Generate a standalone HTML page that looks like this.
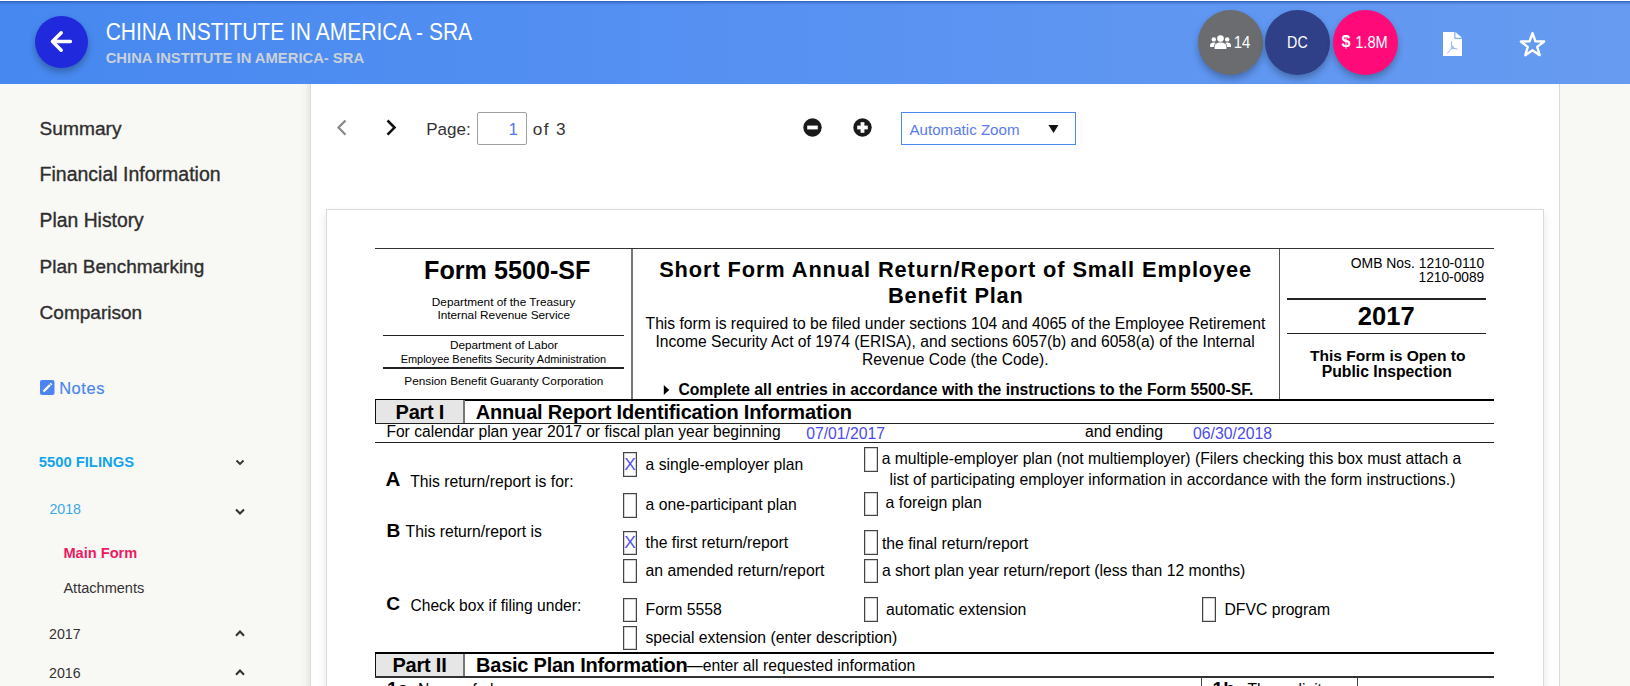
<!DOCTYPE html>
<html><head><meta charset="utf-8">
<style>
html,body{margin:0;padding:0;}
body{width:1630px;height:686px;overflow:hidden;position:relative;background:#F8F8F5;font-family:"Liberation Sans",sans-serif;}
.a{position:absolute;}
.t{position:absolute;white-space:nowrap;line-height:1;color:#000;}
#hdr{position:absolute;left:0;top:0;width:1630px;height:84px;background:linear-gradient(90deg,#4688F0 0%,#5892F2 50%,#679BF1 100%);}
#hdr:before{content:"";position:absolute;left:0;top:0;width:100%;height:1px;background:#fff;}
#hdr:after{content:"";position:absolute;left:0;top:1px;width:100%;height:4px;background:linear-gradient(180deg,#2A5BB5 0%,rgba(42,91,181,.45) 35%,rgba(42,91,181,0) 100%);}
.circ{position:absolute;border-radius:50%;box-shadow:0 4px 7px rgba(0,0,0,.28);}
#panel{position:absolute;left:310px;top:84px;width:1248px;height:602px;background:#fff;border-left:1px solid #DDD8DB;border-right:1px solid #DDD8DB;}
#sbshadow{position:absolute;left:299px;top:84px;width:11px;height:602px;background:linear-gradient(90deg,rgba(0,0,0,0) 0%,rgba(0,0,0,.015) 50%,rgba(0,0,0,.065) 100%);}
#page{position:absolute;left:326px;top:209px;width:1216px;height:500px;background:#fff;border:1px solid #DED8DC;box-shadow:0 5px 9px rgba(0,0,0,.11);}
.hl{position:absolute;background:#222;}
.vl{position:absolute;background:#666;}
.cb{position:absolute;width:12px;height:22.6px;border:1px solid #444;box-shadow:inset 0 0 0 0.5px #aaa;}
.chev{position:absolute;}
</style></head>
<body>
<div id="hdr"></div>
<!-- back button -->
<div class="circ" style="left:35px;top:15.8px;width:53px;height:52.5px;background:#2129DD;"></div>
<svg class="a" style="left:49px;top:29px" width="25" height="25" viewBox="0 0 25 25"><path d="M21.4 12.5H4M12.2 3.8L3.5 12.5l8.7 8.7" fill="none" stroke="#fff" stroke-width="3.5" stroke-linecap="round" stroke-linejoin="round"/></svg>

<!-- header circles -->
<div class="circ" style="left:1198px;top:10px;width:65px;height:65px;background:#6A6C70;"></div>
<div class="circ" style="left:1265px;top:10px;width:65px;height:65px;background:#2F3F88;"></div>
<div class="circ" style="left:1333px;top:10px;width:65px;height:65px;background:#FF0A78;"></div>
<!-- users icon -->
<svg class="a" style="left:1210px;top:35px" width="21" height="14" viewBox="0 0 21 14">
<circle cx="10.5" cy="3.6" r="3.3" fill="#fff"/>
<path d="M4.6 14v-2.2c0-2.6 2.2-4.3 5.9-4.3s5.9 1.7 5.9 4.3V14z" fill="#fff"/>
<circle cx="3.8" cy="4.4" r="2.2" fill="#fff"/>
<circle cx="17.2" cy="4.4" r="2.2" fill="#fff"/>
<path d="M0 12v-1.6C0 8.6 1.4 7.4 3.8 7.4c.9 0 1.6.2 2.1.5C4.5 8.9 3.8 10.3 3.8 12z" fill="#fff"/>
<path d="M21 12v-1.6c0-1.8-1.4-3-3.8-3-.9 0-1.6.2-2.1.5 1.4 1 2.1 2.4 2.1 4.1z" fill="#fff"/>
</svg>
<!-- pdf icon -->
<svg class="a" style="left:1443px;top:32px" width="19" height="24" viewBox="0 0 19 24">
<path d="M0 0H11.4V6.7H19V24H0z" fill="#fff"/>
<path d="M12.4 0L19 5.7H12.4z" fill="#fff"/>
<path d="M8.6 9.5C8.4 12 8.6 14.5 9.5 15.8M9.5 15.8C8 17.5 6 19.5 4.3 21M9.5 15.8C11 16.3 13 17 14.3 17.2" fill="none" stroke="#6A9BF1" stroke-width="0.8"/>
<circle cx="9.4" cy="15.6" r="1.3" fill="none" stroke="#6A9BF1" stroke-width="0.6"/>
</svg>
<!-- star -->
<svg class="a" style="left:1519px;top:31px" width="27" height="27" viewBox="0 0 27 27"><path d="M13.50 2.10 L16.44 10.25 L25.10 10.53 L18.26 15.85 L20.67 24.17 L13.50 19.30 L6.33 24.17 L8.74 15.85 L1.90 10.53 L10.56 10.25Z" fill="none" stroke="#fff" stroke-width="2.4" stroke-linejoin="round"/></svg>

<!-- sidebar extras -->
<div id="sbshadow"></div>
<div id="panel"></div>
<!-- notes icon -->
<svg class="a" style="left:39.5px;top:380px" width="15" height="15" viewBox="0 0 15 15"><rect x="0" y="0" width="14.5" height="15" rx="2" fill="#4C84F0"/><path d="M3.5 11.5l6.5-6.5" stroke="#fff" stroke-width="2.4" stroke-linecap="butt"/><path d="M10.5 4.5l1-1" stroke="#fff" stroke-width="2.4"/></svg>
<!-- chevrons sidebar -->
<svg class="chev" style="left:234.5px;top:459px" width="10" height="7" viewBox="0 0 10 7"><path d="M1.5 1.5L5 5l3.5-3.5" fill="none" stroke="#333" stroke-width="1.9"/></svg>
<svg class="chev" style="left:234.5px;top:507.5px" width="10" height="8" viewBox="0 0 10 8"><path d="M1 1.6L5 5.6 9 1.6" fill="none" stroke="#333" stroke-width="2.1"/></svg>
<svg class="chev" style="left:234.5px;top:630px" width="10" height="8" viewBox="0 0 10 8"><path d="M1 5.8L5 1.6 9 5.8" fill="none" stroke="#333" stroke-width="2.1"/></svg>
<svg class="chev" style="left:234.5px;top:669px" width="10" height="8" viewBox="0 0 10 8"><path d="M1 5.8L5 1.6 9 5.8" fill="none" stroke="#333" stroke-width="2.1"/></svg>

<!-- toolbar -->
<svg class="a" style="left:334px;top:118px" width="15" height="19" viewBox="0 0 15 19"><path d="M11.5 2.5L4.5 9.6l7 7.1" fill="none" stroke="#888" stroke-width="2.2"/></svg>
<svg class="a" style="left:384px;top:118px" width="15" height="19" viewBox="0 0 15 19"><path d="M3.5 2.5l7 7.1-7 7.1" fill="none" stroke="#111" stroke-width="2.6"/></svg>
<div class="a" style="left:477px;top:112px;width:48px;height:31px;border:1px solid #A0A0A0;border-radius:2px;background:#fff;"></div>
<svg class="a" style="left:803px;top:118px" width="19" height="19" viewBox="0 0 19 19"><circle cx="9.5" cy="9.5" r="9.2" fill="#1A1A1A"/><rect x="4.2" y="7.6" width="10.6" height="3.8" fill="#fff"/></svg>
<svg class="a" style="left:852.5px;top:118px" width="19" height="19" viewBox="0 0 19 19"><circle cx="9.5" cy="9.5" r="9.2" fill="#1A1A1A"/><rect x="4.2" y="7.6" width="10.6" height="3.8" fill="#fff"/><rect x="7.6" y="4.2" width="3.8" height="10.6" fill="#fff"/></svg>
<div class="a" style="left:901px;top:112px;width:173px;height:31px;border:1.5px solid #4A89F0;background:#fff;"></div>
<svg class="a" style="left:1048px;top:124px" width="11" height="10" viewBox="0 0 11 10"><path d="M0.5 1h10L5.5 9z" fill="#111"/></svg>

<!-- pdf page -->
<div id="page"></div>

<!-- form lines -->
<div class="hl" style="left:375px;top:248px;width:1119px;height:1.3px;background:#333;"></div>
<div class="vl" style="left:631px;top:249px;width:2px;height:150px;background:#777;"></div>
<div class="vl" style="left:1278.6px;top:249px;width:1.6px;height:150px;background:#555;"></div>
<div class="hl" style="left:383px;top:334.5px;width:241px;height:1.3px;"></div>
<div class="hl" style="left:383px;top:367.3px;width:241px;height:1.6px;"></div>
<div class="hl" style="left:1287px;top:298.4px;width:199px;height:1.4px;"></div>
<div class="hl" style="left:1287px;top:333px;width:199px;height:1.4px;"></div>
<div class="hl" style="left:375px;top:398.7px;width:1119px;height:2px;background:#000;"></div>
<div class="a" style="left:375px;top:400px;width:88px;height:22.6px;background:#E6E6E6;border-left:1px solid #111;"></div>
<div class="vl" style="left:463px;top:400px;width:1.5px;height:23px;background:#777;"></div>
<div class="hl" style="left:375px;top:422.6px;width:1119px;height:1.3px;"></div>
<div class="hl" style="left:375px;top:441.9px;width:1119px;height:1.3px;"></div>
<div class="hl" style="left:375px;top:651.6px;width:1119px;height:2px;background:#000;"></div>
<div class="a" style="left:375px;top:653.5px;width:88px;height:23px;background:#E6E6E6;border-left:1px solid #111;"></div>
<div class="vl" style="left:463px;top:653.5px;width:1.5px;height:23px;background:#777;"></div>
<div class="hl" style="left:375px;top:676.3px;width:1119px;height:1.4px;background:#333;"></div>
<div class="vl" style="left:1200.5px;top:677px;width:1.4px;height:10px;background:#444;"></div>
<div class="vl" style="left:1356.5px;top:677px;width:1.4px;height:10px;background:#444;"></div>

<!-- checkboxes -->
<div class="cb" style="left:623.4px;top:452.2px;"></div>
<div class="cb" style="left:623.4px;top:493.3px;"></div>
<div class="cb" style="left:623.4px;top:530.7px;"></div>
<div class="cb" style="left:623.4px;top:558.5px;"></div>
<div class="cb" style="left:623.4px;top:597.6px;"></div>
<div class="cb" style="left:623.4px;top:625.5px;"></div>
<div class="cb" style="left:864.2px;top:447px;"></div>
<div class="cb" style="left:864.2px;top:491.5px;"></div>
<div class="cb" style="left:864.2px;top:530.4px;"></div>
<div class="cb" style="left:864.2px;top:558.6px;"></div>
<div class="cb" style="left:864.2px;top:597.4px;"></div>
<div class="cb" style="left:1202.1px;top:597.2px;"></div>
<svg class="a" style="left:663px;top:385px" width="7" height="10" viewBox="0 0 7 10"><path d="M0.8 0L6.2 5 0.8 10z" fill="#000"/></svg>

<div class="t" style="left:105.7px;top:21.91px;font-size:21.01px;transform:scaleY(1.14);transform-origin:0 84.68%;color:#fff;">CHINA INSTITUTE IN AMERICA - SRA</div>
<div class="t" style="left:105.7px;top:50.68px;font-size:14.79px;font-weight:bold;color:#C9D1DB;">CHINA INSTITUTE IN AMERICA- SRA</div>
<div class="t" style="left:1233.7px;top:35.66px;font-size:14.92px;transform:scaleY(1.1);transform-origin:0 84.68%;color:#fff;">14</div>
<div class="t" style="left:1287.1px;top:36.22px;font-size:14.26px;transform:scaleY(1.1);transform-origin:0 84.68%;color:#fff;">DC</div>
<div class="t" style="left:1341.5px;top:34.05px;font-size:16.00px;font-weight:bold;color:#fff;">$</div>
<div class="t" style="left:1355.2px;top:35.88px;font-size:14.66px;transform:scaleY(1.1);transform-origin:0 84.68%;color:#fff;">1.8M</div>
<div class="t" style="left:39.6px;top:118.97px;font-size:19.17px;color:#2E2E2E;-webkit-text-stroke:0.35px #2E2E2E;">Summary</div>
<div class="t" style="left:39.6px;top:164.59px;font-size:19.50px;color:#2E2E2E;-webkit-text-stroke:0.35px #2E2E2E;">Financial Information</div>
<div class="t" style="left:39.6px;top:210.53px;font-size:19.33px;color:#2E2E2E;-webkit-text-stroke:0.35px #2E2E2E;">Plan History</div>
<div class="t" style="left:39.6px;top:256.92px;font-size:18.99px;color:#2E2E2E;-webkit-text-stroke:0.35px #2E2E2E;">Plan Benchmarking</div>
<div class="t" style="left:39.6px;top:302.77px;font-size:19.05px;color:#2E2E2E;-webkit-text-stroke:0.35px #2E2E2E;">Comparison</div>
<div class="t" style="left:59.2px;top:380.41px;font-size:16.40px;letter-spacing:0.590px;color:#4A86F0;-webkit-text-stroke:0.2px #4A86F0;">Notes</div>
<div class="t" style="left:38.8px;top:454.98px;font-size:14.78px;font-weight:bold;color:#12A5EA;">5500 FILINGS</div>
<div class="t" style="left:49.4px;top:501.87px;font-size:14.20px;color:#3DA9E6;">2018</div>
<div class="t" style="left:63.4px;top:546.22px;font-size:14.62px;font-weight:bold;color:#EC1A62;">Main Form</div>
<div class="t" style="left:63.4px;top:581.07px;font-size:14.56px;color:#333;">Attachments</div>
<div class="t" style="left:49.1px;top:627.17px;font-size:14.20px;color:#333;">2017</div>
<div class="t" style="left:49.1px;top:666.17px;font-size:14.20px;color:#333;">2016</div>
<div class="t" style="left:426.2px;top:120.85px;font-size:17.07px;color:#333;">Page:</div>
<div class="t" style="left:508.4px;top:120.90px;font-size:17.00px;color:#4E7AF0;">1</div>
<div class="t" style="left:532.8px;top:120.74px;font-size:17.20px;letter-spacing:1.370px;color:#333;">of 3</div>
<div class="t" style="left:909.5px;top:122.39px;font-size:15.12px;color:#5A7BEA;">Automatic Zoom</div>
<div class="t" style="left:424.1px;top:257.69px;font-size:25.16px;font-weight:bold;">Form 5500-SF</div>
<div class="t" style="left:431.8px;top:296.80px;font-size:11.81px;">Department of the Treasury</div>
<div class="t" style="left:437.4px;top:309.89px;font-size:11.82px;">Internal Revenue Service</div>
<div class="t" style="left:449.9px;top:338.92px;font-size:11.79px;">Department of Labor</div>
<div class="t" style="left:400.7px;top:353.64px;font-size:10.94px;">Employee Benefits Security Administration</div>
<div class="t" style="left:404.3px;top:374.82px;font-size:11.79px;">Pension Benefit Guaranty Corporation</div>
<div class="t" style="left:659.2px;top:258.54px;font-size:21.80px;letter-spacing:0.896px;font-weight:bold;">Short Form Annual Return/Report of Small Employee</div>
<div class="t" style="left:887.9px;top:285.14px;font-size:21.80px;letter-spacing:0.820px;font-weight:bold;">Benefit Plan</div>
<div class="t" style="left:645.6px;top:315.53px;font-size:15.67px;">This form is required to be filed under sections 104 and 4065 of the Employee Retirement</div>
<div class="t" style="left:655.4px;top:333.65px;font-size:15.64px;">Income Security Act of 1974 (ERISA), and sections 6057(b) and 6058(a) of the Internal</div>
<div class="t" style="left:862.1px;top:351.99px;font-size:15.60px;">Revenue Code (the Code).</div>
<div class="t" style="left:678.4px;top:381.50px;font-size:15.71px;font-weight:bold;">Complete all entries in accordance with the instructions to the Form 5500-SF.</div>
<div class="t" style="left:1350.8px;top:256.53px;font-size:13.90px;">OMB Nos. 1210-0110</div>
<div class="t" style="left:1418.5px;top:271.17px;font-size:13.74px;">1210-0089</div>
<div class="t" style="left:1357.8px;top:304.24px;font-size:25.58px;font-weight:bold;">2017</div>
<div class="t" style="left:1310.0px;top:347.73px;font-size:15.55px;font-weight:bold;">This Form is Open to</div>
<div class="t" style="left:1321.7px;top:363.87px;font-size:15.74px;font-weight:bold;">Public Inspection</div>
<div class="t" style="left:395.6px;top:401.86px;font-size:20.00px;letter-spacing:-0.244px;font-weight:bold;">Part I</div>
<div class="t" style="left:475.8px;top:401.86px;font-size:20.00px;letter-spacing:-0.183px;font-weight:bold;">Annual Report Identification Information</div>
<div class="t" style="left:386.4px;top:424.17px;font-size:15.63px;">For calendar plan year 2017 or fiscal plan year beginning</div>
<div class="t" style="left:806.2px;top:425.85px;font-size:15.76px;color:#4B4BEE;">07/01/2017</div>
<div class="t" style="left:1084.9px;top:424.44px;font-size:15.78px;">and ending</div>
<div class="t" style="left:1193.1px;top:425.85px;font-size:15.76px;color:#4B4BEE;">06/30/2018</div>
<div class="t" style="left:385.4px;top:469.23px;font-size:20.63px;font-weight:bold;">A</div>
<div class="t" style="left:410.2px;top:473.98px;font-size:15.73px;">This return/report is for:</div>
<div class="t" style="left:386.5px;top:520.82px;font-size:19.11px;font-weight:bold;">B</div>
<div class="t" style="left:405.6px;top:524.29px;font-size:15.72px;">This return/report is</div>
<div class="t" style="left:386.2px;top:594.12px;font-size:19.11px;font-weight:bold;">C</div>
<div class="t" style="left:410.5px;top:597.69px;font-size:15.60px;">Check box if filing under:</div>
<div class="t" style="left:645.6px;top:456.94px;font-size:15.66px;">a single-employer plan</div>
<div class="t" style="left:645.6px;top:496.89px;font-size:15.72px;">a one-participant plan</div>
<div class="t" style="left:645.5px;top:535.05px;font-size:15.76px;">the first return/report</div>
<div class="t" style="left:645.5px;top:563.05px;font-size:15.77px;">an amended return/report</div>
<div class="t" style="left:645.5px;top:601.72px;font-size:15.80px;">Form 5558</div>
<div class="t" style="left:645.5px;top:629.79px;font-size:15.72px;">special extension (enter description)</div>
<div class="t" style="left:881.7px;top:450.93px;font-size:15.67px;">a multiple-employer plan (not multiemployer) (Filers checking this box must attach a</div>
<div class="t" style="left:889.5px;top:471.62px;font-size:15.69px;">list of participating employer information in accordance with the form instructions.)</div>
<div class="t" style="left:885.6px;top:494.56px;font-size:15.87px;">a foreign plan</div>
<div class="t" style="left:881.9px;top:535.54px;font-size:15.77px;">the final return/report</div>
<div class="t" style="left:881.9px;top:563.28px;font-size:15.72px;">a short plan year return/report (less than 12 months)</div>
<div class="t" style="left:886.1px;top:602.24px;font-size:15.77px;">automatic extension</div>
<div class="t" style="left:1224.5px;top:602.29px;font-size:15.72px;">DFVC program</div>
<div class="t" style="left:392.5px;top:654.76px;font-size:20.00px;letter-spacing:-0.229px;font-weight:bold;">Part II</div>
<div class="t" style="left:476.1px;top:654.76px;font-size:20.00px;letter-spacing:-0.243px;font-weight:bold;">Basic Plan Information</div>
<div class="t" style="left:686.9px;top:658.47px;font-size:15.74px;">—enter all requested information</div>
<div class="t" style="left:624.2px;top:456.47px;font-size:17.39px;color:#5252F0;">X</div>
<div class="t" style="left:624.2px;top:534.47px;font-size:17.39px;color:#5252F0;">X</div>
<div class="t" style="left:387.0px;top:678.91px;font-size:19.00px;font-weight:bold;">1a</div>
<div class="t" style="left:418.0px;top:681.79px;font-size:15.60px;">Name of plan</div>
<div class="t" style="left:1212.6px;top:678.91px;font-size:19.00px;font-weight:bold;">1b</div>
<div class="t" style="left:1247.4px;top:681.79px;font-size:15.60px;">Three-digit</div>
</body></html>
